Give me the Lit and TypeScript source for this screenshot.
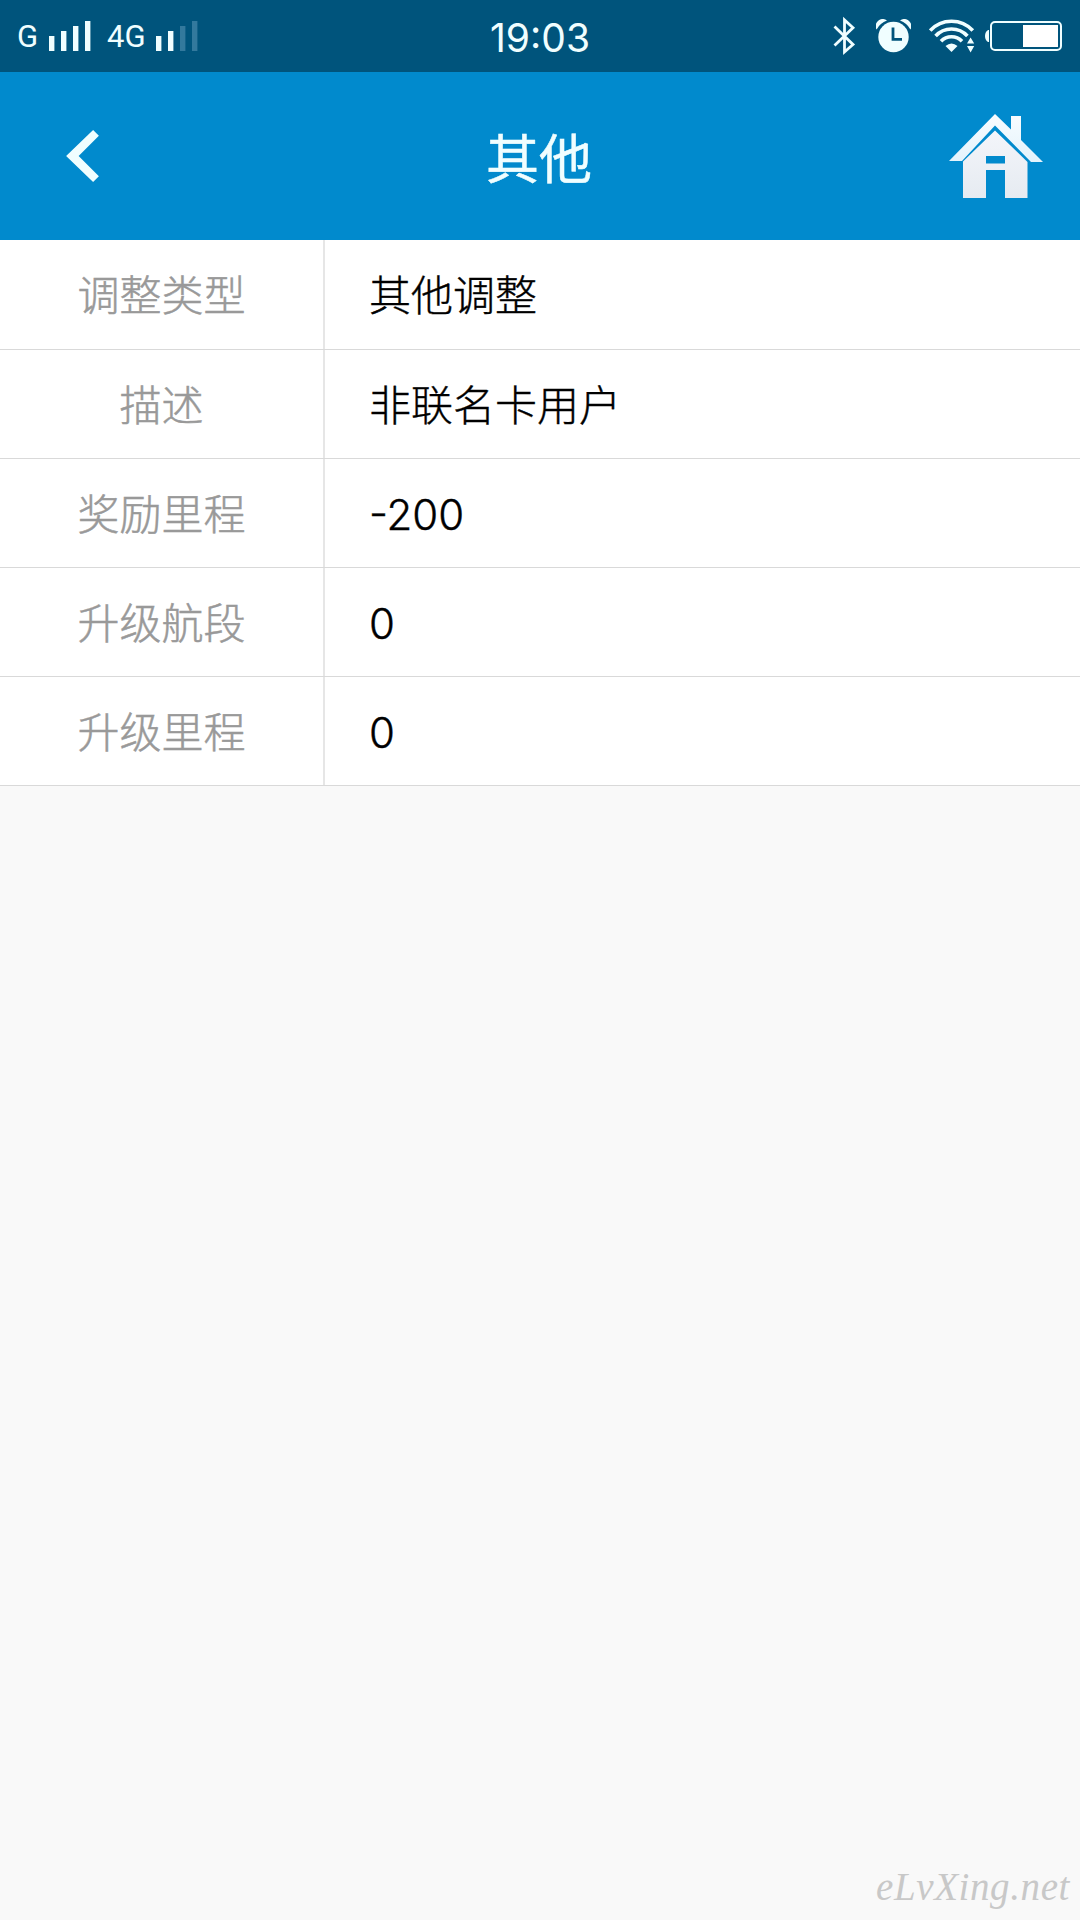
import { LitElement, html, svg, css } from "lit";
import { customElement, property } from "lit/decorators.js";

interface DetailRow {
  label: string;
  value: string;
}

const ROWS: DetailRow[] = [
  { label: "调整类型", value: "其他调整" },
  { label: "描述", value: "非联名卡用户" },
  { label: "奖励里程", value: "-200" },
  { label: "升级航段", value: "0" },
  { label: "升级里程", value: "0" },
];

@customElement("signal-bars")
export class SignalBars extends LitElement {
  @property({ type: Number }) level = 4;

  static styles = css`
    :host { display: block; width: 42px; height: 30px; }
    .bars { display: block; }
    .on { fill: #f0feff; }
    .off { fill: #33799d; }
  `;

  render() {
    return html`<svg class="bars" width="42" height="30" viewBox="0 0 42 30">
      ${[0, 1, 2, 3].map(
        (i) => svg`<rect class=${i < this.level ? "on" : "off"} x=${i * 12} y=${15 - i * 5} width="5.4" height=${15 + i * 5}></rect>`
      )}
    </svg>`;
  }
}

@customElement("status-bar")
export class StatusBar extends LitElement {
  static styles = css`
    :host {
      display: grid;
      grid-template-columns: 1fr auto 1fr;
      align-items: center;
      height: 72px;
      box-sizing: border-box;
      background: #00547c;
      color: #f0feff;
      font-family: Inter, "Liberation Sans", sans-serif;
    }
    .carriers { display: flex; align-items: center; padding-left: 17px; }
    .net { font-family: Roboto, "Liberation Sans", sans-serif; font-size: 31px; line-height: 36px; width: 32px; padding-top: 2px; }
    .net4 { width: 49px; margin-left: 16px; }
    .time { font-size: 39px; line-height: 48px; padding-top: 4px; }
    .icons { display: flex; align-items: center; justify-content: flex-end; padding-right: 18px; }
    .icon { display: block; }
    .alarm { margin-left: 20px; }
    .wifi { margin-left: 18px; }
    .battery { margin-left: 10px; }
  `;

  render() {
    return html`
      <div class="carriers">
        <span class="net">G</span>
        <signal-bars .level=${4}></signal-bars>
        <span class="net net4">4G</span>
        <signal-bars .level=${2}></signal-bars>
      </div>
      <div class="time">19:03</div>
      <div class="icons">
        <svg class="icon" width="23" height="40" viewBox="0 0 23 40" fill="none" stroke="#f0feff" stroke-width="2.8">
          <path d="M1.5 10.5 L20 28.5 L11.5 36 V4 L20 11.8 L1.5 29.5"></path>
        </svg>
        <svg class="icon alarm" width="35" height="34" viewBox="0 0 35 34">
          <path d="M0.6 10.5 A7 7 0 0 1 11 1.6 A19 19 0 0 0 0.6 10.5Z M34.4 10.5 A7 7 0 0 0 24 1.6 A19 19 0 0 1 34.4 10.5Z" fill="#f0feff"></path>
          <circle cx="17.5" cy="18" r="15.2" fill="#f0feff"></circle>
          <path d="M17 8.5 V20.3 H26" fill="none" stroke="#00547c" stroke-width="2.8"></path>
        </svg>
        <svg class="icon wifi" width="46" height="34" viewBox="0 0 46 34">
          <g fill="none" stroke="#f0feff" stroke-width="3.6">
            <path d="M1.2 11.5 A29 29 0 0 1 43.8 11.5"></path>
            <path d="M6.6 17 A21.5 21.5 0 0 1 38.4 17"></path>
            <path d="M12 22.2 A14.5 14.5 0 0 1 33 22.2"></path>
          </g>
          <path d="M22.5 33 L16.5 27 Q22.5 22 28.5 27Z" fill="#f0feff"></path>
          <path d="M38 24.5 L41.6 18.5 L45.2 24.5Z M38 27 H45.2 L41.6 33.4Z" fill="#f0feff"></path>
        </svg>
        <svg class="icon battery" width="77" height="32" viewBox="0 0 77 32">
          <path d="M4 10 H3 Q0 12 0 16 T3 22 H4Z" fill="#f0feff"></path>
          <rect x="6" y="2" width="70" height="28" rx="4" fill="none" stroke="#f0feff" stroke-width="2"></rect>
          <rect x="38" y="5" width="35" height="22" fill="#fff"></rect>
        </svg>
      </div>
    `;
  }
}

@customElement("nav-header")
export class NavHeader extends LitElement {
  @property() heading = "";

  static styles = css`
    :host {
      display: grid;
      grid-template-columns: 1fr auto 1fr;
      align-items: center;
      height: 168px;
      box-sizing: border-box;
      background: #018acd;
      color: #f0feff;
      font-family: "Noto Sans CJK SC", sans-serif;
    }
    .back { padding-left: 66px; }
    .heading { margin: 0; font-size: 53px; font-weight: 400; line-height: 76px; padding-right: 2px; -webkit-text-stroke: 0.5px #f0feff; }
    .home { justify-self: end; padding-right: 37px; }
    .icon { display: block; }
  `;

  render() {
    return html`
      <div class="back">
        <svg class="icon" width="33" height="54" viewBox="0 0 34 56">
          <path d="M28 1 L34 7 L13 28 L34 49 L28 55 L0 28Z" fill="#f0feff"></path>
        </svg>
      </div>
      <h1 class="heading">${this.heading}</h1>
      <div class="home">
        <svg class="icon" width="94" height="86" viewBox="0 0 94 86">
          <defs>
            <linearGradient id="roof" x1="0" y1="0" x2="0" y2="1">
              <stop offset="0" stop-color="#f8fcff"></stop>
              <stop offset="1" stop-color="#e3f3fc"></stop>
            </linearGradient>
            <linearGradient id="wall" x1="0" y1="0" x2="0" y2="1">
              <stop offset="0" stop-color="#f3f5fa"></stop>
              <stop offset="1" stop-color="#e6ebf1"></stop>
            </linearGradient>
          </defs>
          <path d="M46 1 L62 16.5 V3 H72 V27 L94 49 H82 L46 12.5 L13 48 H0Z" fill="url(#roof)"></path>
          <path d="M46 17.5 L78.5 49 V85 H56 V57 H37 V85 H14 V48.5Z M37 43 V50.5 H56 V43Z" fill="url(#wall)" fill-rule="evenodd"></path>
        </svg>
      </div>
    `;
  }
}

@customElement("app-root")
export class AppRoot extends LitElement {
  static styles = css`
    :host {
      display: flex;
      flex-direction: column;
      height: 1920px;
      background: #f9f9f9;
      font-family: Inter, "Noto Sans CJK SC", sans-serif;
    }
    .list { margin: 0; }
    .row {
      display: grid;
      grid-template-columns: 325px 1fr;
      height: 109px;
      box-sizing: border-box;
      border-bottom: 1px solid #d9d9d9;
      background: #fff;
      font-size: 42px;
      font-weight: 300;
      line-height: 60px;
    }
    .row:first-child { height: 110px; }
    .label, .value { margin: 0; display: flex; align-items: center; padding-top: 3px; }
    .label { justify-content: center; border-right: 2px solid #e6e6e6; color: #999; -webkit-text-stroke: 0.5px #999; }
    .value { padding-left: 44px; color: #000; font-feature-settings: "case"; -webkit-text-stroke: 0.4px #000; }
    .spacer { flex: 1; }
    .mark {
      align-self: flex-end;
      padding: 0 10px 11px 0;
      font-family: "Liberation Serif", serif;
      font-style: italic;
      font-size: 39px;
      line-height: 44px;
      letter-spacing: 0.6px;
      color: #c8c8c8;
    }
  `;

  render() {
    return html`
      <status-bar></status-bar>
      <nav-header .heading=${"其他"}></nav-header>
      <dl class="list">
        ${ROWS.map(
          (row) => html`<div class="row"><dt class="label">${row.label}</dt><dd class="value">${row.value}</dd></div>`
        )}
      </dl>
      <div class="spacer"></div>
      <div class="mark">eLvXing.net</div>
    `;
  }
}
